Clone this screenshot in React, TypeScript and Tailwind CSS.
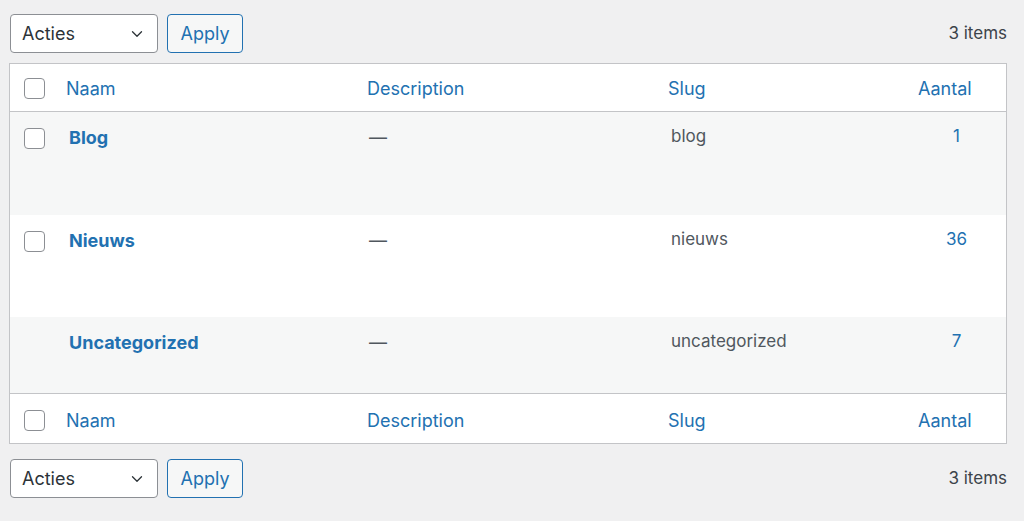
import { ChevronDown } from 'lucide-react';

interface Term {
  name: string;
  slug: string;
  count: number;
  checkbox: boolean;
  height: string;
  striped: boolean;
}

const terms: Term[] = [
  { name: 'Blog', slug: 'blog', count: 1, checkbox: true, height: 'h-[103px]', striped: true },
  { name: 'Nieuws', slug: 'nieuws', count: 36, checkbox: true, height: 'h-[102px]', striped: false },
  { name: 'Uncategorized', slug: 'uncategorized', count: 7, checkbox: false, height: 'h-[76px]', striped: true },
];

const cols = 'grid grid-cols-[47px_301px_301px_222px_1fr]';

function Checkbox() {
  return <span className="block h-[21px] w-[21px] rounded-[4px] border border-[#8c8f94] bg-white" />;
}

function BulkActions() {
  return (
    <div className="flex items-center justify-between pl-[10px] pr-[17px]">
      <div className="flex items-center gap-[9px]">
        <div className="flex h-[39px] w-[148px] items-center justify-between rounded-[4px] border border-[#8c8f94] bg-white pl-[11px] pr-[11px] text-[18px] text-[#2c3338]">
          <span>Acties</span>
          <ChevronDown size={18} strokeWidth={1.75} className="text-[#2c3338]" />
        </div>
        <button className="h-[39px] w-[76px] rounded-[4px] border border-[#2271b1] bg-[#f6f7f7] text-[18px] text-[#2271b1]">
          Apply
        </button>
      </div>
      <span className="text-[17px] text-[#3c434a]">3 items</span>
    </div>
  );
}

function HeaderRow({ border }: { border: 'top' | 'bottom' }) {
  return (
    <div
      className={`${cols} items-center bg-white text-[18px] text-[#2271b1] ${
        border === 'bottom' ? 'h-[48px] border-b border-[#c3c4c7] pt-[2px]' : 'h-[50px] border-t border-[#c3c4c7] pt-[3px]'
      }`}
    >
      <div className="pl-[14px]">
        <Checkbox />
      </div>
      <div className="pl-[9px]">Naam</div>
      <div className="pl-[9px]">Description</div>
      <div className="pl-[9px]">Slug</div>
      <div className="pl-[37px]">Aantal</div>
    </div>
  );
}

export default function App() {
  return (
    <div className="min-h-[521px] bg-[#f0f0f1] pt-[14px] font-['Inter',sans-serif]">
      <BulkActions />
      <div className="ml-[9px] mr-[17px] mt-[10px] border border-[#c3c4c7] bg-white">
        <HeaderRow border="bottom" />
        {terms.map((t) => (
          <div key={t.slug} className={`${cols} ${t.height} ${t.striped ? 'bg-[#f6f7f7]' : 'bg-white'} pt-[12px]`}>
            <div className="pl-[14px] pt-[4px]">{t.checkbox && <Checkbox />}</div>
            <div className="pl-[12px] text-[18px] font-bold text-[#2271b1]">{t.name}</div>
            <div className="pl-[11px] text-[18px] text-[#50575e]">—</div>
            <div className="pl-[12px] text-[17px] text-[#50575e]">{t.slug}</div>
            <div className="pl-[26px] text-center text-[17px] text-[#2271b1]">{t.count}</div>
          </div>
        ))}
        <HeaderRow border="top" />
      </div>
      <div className="mt-[15px]">
        <BulkActions />
      </div>
    </div>
  );
}
